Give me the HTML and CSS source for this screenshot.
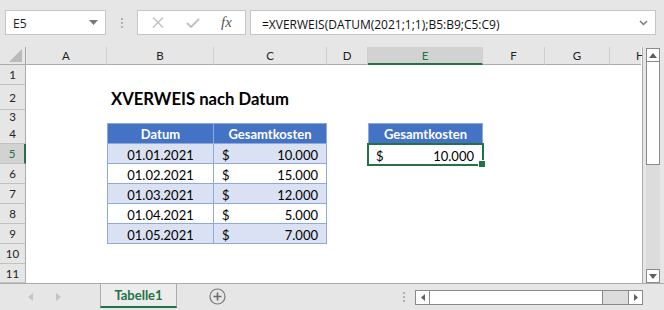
FILE: index.html
```html
<!DOCTYPE html>
<html lang="de">
<head>
<meta charset="utf-8">
<title>XVERWEIS nach Datum</title>
<link rel="stylesheet" href="styles.css">
</head>
<body>
<div class="app">
  <div class="toolbar">
    <div class="namebox">
      <span>E5</span>
      <svg width="9" height="5" viewBox="0 0 9 5"><polygon points="0,0 9,0 4.5,5" fill="#7a7a7a"/></svg>
    </div>
    <div class="grip"><i></i><i></i><i></i></div>
    <div class="fxbox">
      <svg class="ico-x" width="12" height="11" viewBox="0 0 12 11"><path d="M1 0.5 L11 10.5 M11 0.5 L1 10.5" stroke="#c2c2c2" stroke-width="1.4" fill="none"/></svg>
      <svg class="ico-ok" width="14" height="10" viewBox="0 0 14 10"><path d="M1 5 L5 9 L13 1" stroke="#c2c2c2" stroke-width="2" fill="none"/></svg>
      <span class="fx">fx</span>
    </div>
    <div class="formula">
      <span>=XVERWEIS(DATUM(2021;1;1);B5:B9;C5:C9)</span>
      <svg width="9" height="6" viewBox="0 0 9 6"><path d="M1 1 L4.5 4.5 L8 1" stroke="#7a7a7a" stroke-width="1.5" fill="none"/></svg>
    </div>
  </div>

  <div class="sheet">
    <div class="grid">
      <div class="row hdr">
        <div class="corner"><svg width="13" height="13" viewBox="0 0 13 13"><polygon points="0,13 13,13 13,0" fill="#b9b9b9"/></svg></div>
        <div class="ch">A</div><div class="ch">B</div><div class="ch">C</div><div class="ch">D</div>
        <div class="ch ch-sel">E</div><div class="ch">F</div><div class="ch">G</div><div class="ch ch-cut">H</div>
      </div>
      <div class="row r20">
        <div class="rh">1</div><div class="c"></div><div class="c"></div><div class="c"></div><div class="c"></div><div class="c"></div><div class="c"></div><div class="c"></div><div class="c"></div>
      </div>
      <div class="row r25">
        <div class="rh">2</div><div class="c"></div><div class="c title">XVERWEIS nach Datum</div><div class="c"></div><div class="c"></div><div class="c"></div><div class="c"></div><div class="c"></div><div class="c"></div>
      </div>
      <div class="row r13">
        <div class="rh">3</div><div class="c"></div><div class="c"></div><div class="c"></div><div class="c"></div><div class="c"></div><div class="c"></div><div class="c"></div><div class="c"></div>
      </div>
      <div class="row r21">
        <div class="rh">4</div><div class="c"></div>
        <div class="c th first">Datum</div><div class="c th">Gesamtkosten</div>
        <div class="c"></div>
        <div class="c th first">Gesamtkosten</div>
        <div class="c"></div><div class="c"></div><div class="c"></div>
      </div>
      <div class="row r20">
        <div class="rh rh-sel">5</div><div class="c"></div>
        <div class="c td band first date">01.01.2021</div><div class="c td band money"><span>$</span><span>10.000</span></div>
        <div class="c"></div>
        <div class="c money sel"><span>$</span><span>10.000</span></div>
        <div class="c"></div><div class="c"></div><div class="c"></div>
      </div>
      <div class="row r20">
        <div class="rh">6</div><div class="c"></div>
        <div class="c td first date">01.02.2021</div><div class="c td money"><span>$</span><span>15.000</span></div>
        <div class="c"></div><div class="c"></div><div class="c"></div><div class="c"></div><div class="c"></div>
      </div>
      <div class="row r20">
        <div class="rh">7</div><div class="c"></div>
        <div class="c td band first date">01.03.2021</div><div class="c td band money"><span>$</span><span>12.000</span></div>
        <div class="c"></div><div class="c"></div><div class="c"></div><div class="c"></div><div class="c"></div>
      </div>
      <div class="row r20">
        <div class="rh">8</div><div class="c"></div>
        <div class="c td first date">01.04.2021</div><div class="c td money"><span>$</span><span>5.000</span></div>
        <div class="c"></div><div class="c"></div><div class="c"></div><div class="c"></div><div class="c"></div>
      </div>
      <div class="row r20">
        <div class="rh">9</div><div class="c"></div>
        <div class="c td band first date">01.05.2021</div><div class="c td band money"><span>$</span><span>7.000</span></div>
        <div class="c"></div><div class="c"></div><div class="c"></div><div class="c"></div><div class="c"></div>
      </div>
      <div class="row r20">
        <div class="rh">10</div><div class="c"></div><div class="c"></div><div class="c"></div><div class="c"></div><div class="c"></div><div class="c"></div><div class="c"></div><div class="c"></div>
      </div>
      <div class="row r19">
        <div class="rh">11</div><div class="c"></div><div class="c"></div><div class="c"></div><div class="c"></div><div class="c"></div><div class="c"></div><div class="c"></div><div class="c"></div>
      </div>
    </div>

    <div class="vscroll">
      <div class="sbtn"><svg width="8" height="5" viewBox="0 0 8 5"><polygon points="0,5 8,5 4,0" fill="#606060"/></svg></div>
      <div class="vthumb"></div>
      <div class="vtrack"></div>
      <div class="sbtn"><svg width="8" height="5" viewBox="0 0 8 5"><polygon points="0,0 8,0 4,5" fill="#606060"/></svg></div>
    </div>
  </div>

  <div class="tabbar">
    <div class="nav">
      <svg width="5" height="8" viewBox="0 0 5 8"><polygon points="5,0 5,8 0,4" fill="#c4c4c4"/></svg>
      <svg width="5" height="8" viewBox="0 0 5 8"><polygon points="0,0 0,8 5,4" fill="#c4c4c4"/></svg>
    </div>
    <div class="tab">Tabelle1</div>
    <div class="addsheet">
      <svg width="17" height="17" viewBox="0 0 17 17"><circle cx="8.5" cy="8.5" r="7.5" fill="none" stroke="#7a7a7a" stroke-width="1.2"/><path d="M8.5 4.5 V12.5 M4.5 8.5 H12.5" stroke="#6a6a6a" stroke-width="1.6"/></svg>
    </div>
    <div class="spacer"></div>
    <div class="grip2"><i></i><i></i><i></i></div>
    <div class="hscroll">
      <div class="hbtn"><svg width="4" height="7" viewBox="0 0 4 7"><polygon points="4,0 4,7 0,3.5" fill="#606060"/></svg></div>
      <div class="hthumb"></div>
      <div class="htrack"></div>
      <div class="hbtn hbtn-r"><svg width="4" height="7" viewBox="0 0 4 7"><polygon points="0,0 0,7 4,3.5" fill="#606060"/></svg></div>
    </div>
  </div>
</div>
</body>
</html>
```

FILE: styles.css
```css
* {
  box-sizing: border-box;
  margin: 0;
  padding: 0;
}

body {
  margin: 0;
  width: 664px;
  height: 310px;
  overflow: hidden;
  background: #e6e6e6;
  font-family: Lato, "Liberation Sans", sans-serif;
  color: #000;
}

.app {
  display: flex;
  flex-direction: column;
  width: 664px;
  height: 310px;
}

/* ---------- toolbar ---------- */
.toolbar {
  height: 47px;
  flex: none;
  display: flex;
  align-items: flex-start;
  padding: 10px 8px 0 5px;
  background: #e6e6e6;
}

.namebox {
  width: 101px;
  height: 25px;
  background: #fff;
  border: 1px solid #c6c6c6;
  display: flex;
  align-items: center;
  justify-content: space-between;
  padding: 3px 7px 0 7px;
  font: 12px/16px "Open Sans", sans-serif;
  color: #222;
}

.namebox svg {
  margin-top: -3px;
}

.grip {
  width: 31px;
  height: 25px;
  display: flex;
  flex-direction: column;
  align-items: center;
  justify-content: center;
  gap: 2px;
}

.grip i,
.grip2 i {
  display: block;
  width: 2px;
  height: 2px;
  background: #b0b0b0;
}

.fxbox {
  width: 109px;
  height: 25px;
  background: #fff;
  border: 1px solid #c6c6c6;
  display: flex;
  align-items: center;
  padding-left: 14px;
}

.ico-ok {
  margin-left: 22px;
}

.fx {
  margin-left: 21px;
  font: italic 15px/16px "Liberation Serif", "DejaVu Serif", serif;
  color: #555;
  margin-top: -2px;
}

.formula {
  flex: 1;
  margin-left: 4px;
  height: 25px;
  background: #fff;
  border: 1px solid #c6c6c6;
  display: flex;
  align-items: center;
  justify-content: space-between;
  padding: 5px 7px 0 11px;
  font: 12px/16px "Open Sans", sans-serif;
  color: #111;
}

.formula svg {
  margin-top: -5px;
}

/* ---------- sheet ---------- */
.sheet {
  height: 236px;
  flex: none;
  display: flex;
}

.grid {
  width: 643px;
  background: #fff;
  border-right: 1px solid #ababab;
  overflow: hidden;
}

.row {
  display: grid;
  grid-template-columns: 26px 81px 107px 113px 41px 115px 62px 65px 31px;
}

.hdr { height: 18px; }
.r13 { height: 13px; }
.r19 { height: 19px; }
.r20 { height: 20px; }
.r21 { height: 21px; }
.r25 { height: 25px; }

.corner {
  background: #e6e6e6;
  border-right: 1px solid #ababab;
  border-bottom: 1px solid #ababab;
  display: flex;
  align-items: flex-end;
  justify-content: flex-end;
  padding: 0 3px 2px 0;
}

.ch {
  background: #e6e6e6;
  border-right: 1px solid #d0d0d0;
  border-bottom: 1px solid #ababab;
  display: flex;
  align-items: center;
  justify-content: center;
  font-size: 11.5px;
  color: #222;
}

.ch-sel {
  background: #d2d2d2;
  color: #217346;
  border-bottom: 2px solid #217346;
}

.ch-cut {
  justify-content: flex-start;
  padding-left: 26px;
  border-right: 0;
}

.rh {
  background: #e6e6e6;
  border-right: 1px solid #ababab;
  border-bottom: 1px solid #c2c2c2;
  display: flex;
  align-items: center;
  justify-content: center;
  font-size: 11.5px;
  color: #222;
}

.rh-sel {
  background: #d2d2d2;
  color: #217346;
  border-right: 2px solid #217346;
}

.c {
  position: relative;
  display: flex;
  align-items: flex-end;
  font-size: 13px;
  line-height: 13px;
  padding: 0 4px 1px;
  white-space: nowrap;
}

.title {
  overflow: visible;
  font-weight: bold;
  font-size: 16.7px;
  line-height: 16px;
  padding: 0 0 3px 4px;
  z-index: 1;
}

.th {
  background: #4472c4;
  color: #fff;
  font-weight: bold;
  justify-content: center;
  border-top: 1px solid #8ea9db;
  border-right: 1px solid #8ea9db;
  border-bottom: 1px solid #8ea9db;
  padding-bottom: 2px;
}

.td {
  border-right: 1px solid #8ea9db;
  border-bottom: 1px solid #8ea9db;
}

.first {
  border-left: 1px solid #8ea9db;
}

.band {
  background: #d9e1f2;
}

.date {
  justify-content: center;
}

.money {
  justify-content: space-between;
  padding: 0 8px 1px 8px;
}

.sel {
  padding: 0 9px 1px 8px;
}

.sel::after {
  content: "";
  position: absolute;
  left: -1px;
  top: -1px;
  right: -1px;
  bottom: -2px;
  border: 2px solid #217346;
}

.sel::before {
  content: "";
  position: absolute;
  right: -2px;
  bottom: -3px;
  width: 6px;
  height: 6px;
  background: #217346;
  border-left: 1px solid #fff;
  border-top: 1px solid #fff;
  z-index: 2;
}

/* ---------- vertical scrollbar ---------- */
.vscroll {
  width: 21px;
  display: flex;
  flex-direction: column;
  padding: 1px 4px 0 3px;
  background: #e6e6e6;
}

.sbtn {
  height: 14px;
  flex: none;
  background: #fff;
  border: 1px solid #8a8a8a;
  display: flex;
  align-items: center;
  justify-content: center;
}

.vthumb {
  height: 103px;
  flex: none;
  background: #fff;
  border: 1px solid #8a8a8a;
  border-top: 0;
}

.vtrack {
  flex: 1;
  background: #dcdcdc;
}

/* ---------- tab bar ---------- */
.tabbar {
  flex: 1;
  display: flex;
  align-items: stretch;
  border-top: 1px solid #ababab;
  background: #e6e6e6;
  padding-right: 21px;
}

.nav {
  width: 100px;
  display: flex;
  align-items: center;
  padding-left: 28px;
  gap: 23px;
}

.tab {
  width: 77px;
  background: #ececec;
  border-left: 1px solid #ababab;
  border-right: 1px solid #ababab;
  border-bottom: 2px solid #217346;
  margin-bottom: 2px;
  display: flex;
  align-items: center;
  justify-content: center;
  font-weight: bold;
  font-size: 13px;
  color: #217346;
}

.addsheet {
  width: 81px;
  display: flex;
  align-items: center;
  justify-content: center;
  padding-bottom: 1px;
}

.spacer {
  flex: 1;
}

.grip2 {
  width: 16px;
  display: flex;
  flex-direction: column;
  align-items: center;
  justify-content: center;
  gap: 2px;
  padding-right: 6px;
}

.hscroll {
  width: 228px;
  height: 15px;
  margin-top: 6px;
  display: flex;
  border: 1px solid #8a8a8a;
  background: #fff;
}

.hbtn {
  width: 14px;
  flex: none;
  border-right: 1px solid #8a8a8a;
  display: flex;
  align-items: center;
  justify-content: center;
}

.hbtn-r {
  border-right: 0;
  border-left: 1px solid #8a8a8a;
}

.hthumb {
  width: 173px;
  flex: none;
  background: #fff;
  border-right: 1px solid #8a8a8a;
}

.htrack {
  flex: 1;
  background: #dcdcdc;
}
```
